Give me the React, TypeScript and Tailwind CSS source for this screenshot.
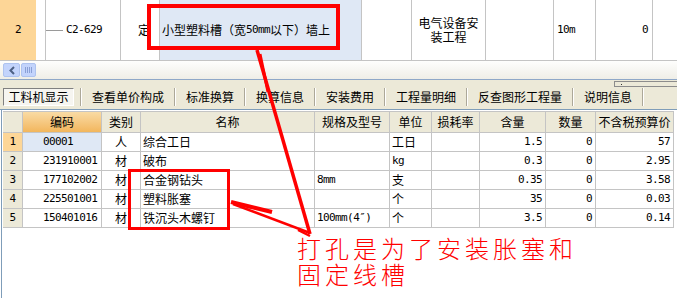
import React from "react";

const rows = [
  ["1", "00001", "人", "综合工日", "", "工日", "", "1.5", "0", "57"],
  ["2", "231910001", "材", "破布", "", "kg", "", "0.3", "0", "2.95"],
  ["3", "177102002", "材", "合金钢钻头", "8mm", "支", "", "0.35", "0", "3.58"],
  ["4", "225501001", "材", "塑料胀塞", "", "个", "", "35", "0", "0.03"],
  ["5", "150401016", "材", "铁沉头木螺钉", "100mm(4″)", "个", "", "3.5", "0", "0.14"],
];

const headers = ["", "编码", "类别", "名称", "规格及型号", "单位", "损耗率", "含量", "数量", "不含税预算价"];

const tabs = ["查看单价构成", "标准换算", "换算信息", "安装费用", "工程量明细", "反查图形工程量", "说明信息"];

const MONO = "font-['DejaVu_Sans_Mono',monospace] text-[11px] tracking-[-0.6px]";

function Sep() {
  return <div className="w-[2px] h-[18px] border-l border-[#aca899] border-r border-r-white" />;
}

function isAscii(s: string) {
  return /^[\x20-\x7e″]+$/.test(s);
}

export default function App() {
  return (
    <div className="relative w-[677px] h-[298px] overflow-hidden bg-white text-black text-[12px] font-['Noto_Sans_CJK_SC',sans-serif]">
      {/* top grid row */}
      <div className="flex h-[61px] border-b border-[#c4c4c4]">
        <div className={"w-[37px] bg-[#fdd697] border-r border-white flex items-center justify-center " + MONO}>2</div>
        <div className="w-[9px] border-r border-[#c4c4c4]" />
        <div className="w-[75px] border-r border-[#c4c4c4] flex items-center">
          <div className="w-[17px] h-px bg-[#9a9a9a] mr-[3px]" />
          <span className={MONO}>C2-629</span>
        </div>
        <div className="w-[39px] border-r border-[#c4c4c4] flex items-center justify-center pl-[8px]">定</div>
        <div className="w-[202px] border-r border-[#c4c4c4] bg-[#dfe8f5] flex items-center pl-[2px] whitespace-nowrap">
          小型塑料槽（宽<span className={MONO}>50mm</span>以下）墙上
        </div>
        <div className="w-[50px] border-r border-[#c4c4c4]" />
        <div className="w-[74px] border-r border-[#c4c4c4] flex flex-col items-center justify-center text-center">
          <div className="h-[14px] leading-[14px] text-[12px]">电气设备安</div>
          <div className="h-[14px] leading-[14px] text-[12px]">装工程</div>
        </div>
        <div className="w-[68px] border-r border-[#c4c4c4]" />
        <div className={"w-[42px] border-r border-[#c4c4c4] flex items-center pl-[3px] " + MONO}>10m</div>
        <div className={"w-[57px] border-r border-[#c4c4c4] flex items-center justify-end pr-[4px] " + MONO}>0</div>
        <div className="flex-1" />
      </div>

      {/* horizontal scroll strip */}
      <div className="h-[19px] bg-gradient-to-b from-[#fefefd] to-[#efeee7] flex items-center pl-[3px] gap-[1px] border-b border-[#8fa8c8]">
        <div className="w-[17px] h-[14px] rounded-[2px] bg-[#c3d4fc] border border-[#aec3ef] flex items-center justify-center">
          <svg width="8" height="9" viewBox="0 0 8 9">
            <path d="M6 1 L2.5 4.5 L6 8" fill="none" stroke="#4d6185" strokeWidth="2" />
          </svg>
        </div>
        <div className="w-[15px] h-[14px] rounded-[2px] bg-[#c3d4fc] border border-[#aec3ef] flex items-center justify-center gap-[1px]">
          <div className="w-px h-[6px] bg-[#8aa0d6]" />
          <div className="w-px h-[6px] bg-[#8aa0d6]" />
          <div className="w-px h-[6px] bg-[#8aa0d6]" />
          <div className="w-px h-[6px] bg-[#8aa0d6]" />
        </div>
      </div>

      {/* tab bar */}
      <div className="h-[30px] bg-[#ece9d8] border-b border-[#7f9db9] flex flex-col">
        <div className="h-[8px] flex pt-[1px]">
          <div className="ml-auto w-[63px] h-[6px] border border-[#8c8c8c] border-r-0 flex items-center pl-[6px]">
            <div className="w-px h-px bg-[#333]" />
          </div>
        </div>
        <div className="flex items-center h-[18px]">
          <div className="ml-[3px] w-[71px] h-[18px] border border-t-[#808080] border-l-[#808080] border-b-white border-r-white bg-[#f6f5f0] flex items-center justify-center leading-[16px]">
            工料机显示
          </div>
          <div className="w-[6px]" />
          {tabs.map((t) => (
            <React.Fragment key={t}>
              <Sep />
              <div className="px-[10px] leading-[18px] whitespace-nowrap">{t}</div>
            </React.Fragment>
          ))}
          <Sep />
        </div>
      </div>

      {/* lower grid */}
      <div className="ml-px border-l border-[#7f9db9] h-[188px] pt-[1px]">
        <div className="ml-px grid grid-cols-[20px_79px_39px_174px_75px_42px_48px_66px_50px_78px] w-[671px] border-t border-[#c4c4c4]">
          {headers.map((h, i) => (
            <div
              key={"h" + i}
              className={
                "h-[21px] border-r border-b border-[#c4c4c4] flex items-center justify-center whitespace-nowrap " +
                (i === 1 ? "bg-gradient-to-b from-[#f9dba4] to-[#f2b65c]" : "bg-[#ece9d8]")
              }
            >
              {h}
            </div>
          ))}
          {rows.map((r, ri) =>
            r.map((c, ci) => {
              let cls = "h-[19px] border-r border-b border-[#c4c4c4] flex items-center whitespace-nowrap leading-[18px] ";
              if (c && isAscii(c)) cls += MONO + " ";
              if (ci === 0) cls += (ri === 0 ? "bg-[#fdd697] " : "bg-[#ece9d8] ") + "justify-center";
              else if (ci === 1) cls += (ri === 0 ? "bg-[#dfe8f5] " : "") + "pl-[20px]";
              else if (ci === 2) cls += "justify-center";
              else if (ci === 3 || ci === 4 || ci === 5) cls += "pl-[2px]";
              else cls += "justify-end pr-[3px]";
              return (
                <div key={ri + "-" + ci} className={cls}>
                  {c}
                </div>
              );
            })
          )}
        </div>
      </div>

      {/* annotations */}
      <svg className="absolute left-0 top-0 pointer-events-none" width="677" height="298" viewBox="0 0 677 298">
        <rect x="149" y="6" width="189" height="42" fill="none" stroke="#ff0000" strokeWidth="4" />
        <rect x="129.5" y="170.5" width="99" height="58" fill="none" stroke="#ff0000" strokeWidth="3" />
        <path d="M257 50 L310 234" stroke="#ff0000" strokeWidth="3.5" fill="none" />
        <path d="M260 54 L268 92" stroke="#ff0000" strokeWidth="3" fill="none" />
        <path d="M231 202 L272 212" stroke="#ff0000" strokeWidth="4" fill="none" />
        <path d="M233 204 L310 233" stroke="#ff0000" strokeWidth="2.5" fill="none" />
        <path d="M298 230 L310 236" stroke="#ff0000" strokeWidth="2.5" fill="none" />
      </svg>
      <div className="absolute left-[297px] top-[235px] text-[#ff0000] text-[24px] tracking-[4px] font-light whitespace-nowrap flex flex-col">
        <div className="h-[26px] leading-[26px]">打孔是为了安装胀塞和</div>
        <div className="h-[26px] leading-[26px]">固定线槽</div>
      </div>
    </div>
  );
}
